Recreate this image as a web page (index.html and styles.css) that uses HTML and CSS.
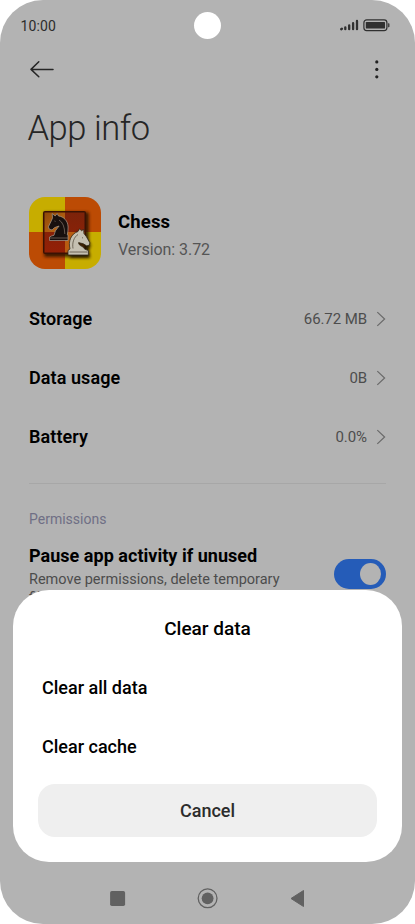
FILE: index.html
```html
<!DOCTYPE html>
<html lang="en">
<head>
<meta charset="utf-8">
<title>App info</title>
<link rel="stylesheet" href="styles.css">
</head>
<body>
<div class="phone">
  <header class="status">
    <span class="time">10:00</span>
    <svg class="status-icons" width="50" height="14" viewBox="0 0 50 14">
      <g stroke="#303030" stroke-width="2.3" stroke-linecap="round">
        <path d="M1.200 11.200l.7-.5M5.300 11.200V9.300M9.200 11.200V7.300M13.100 11.200V5.200M17 11.200V3"/>
      </g>
      <rect x="23.900" y="1.900" width="23" height="10.700" rx="2.800" fill="none" stroke="#303030" stroke-width="1.200"/>
      <rect x="25.800" y="3.900" width="19.200" height="6.700" rx=".7" fill="#303030"/>
      <path d="M47.900 5.200h.8q.8 0 .8.800v2.400q0 .8-.8.800h-.8z" fill="#444"/>
    </svg>
    <span class="camera"></span>
  </header>
  <nav class="toolbar">
    <svg width="26" height="18" viewBox="0 0 26 18" fill="none" stroke="#262626" stroke-width="1.5" stroke-linecap="round" stroke-linejoin="round"><path d="M24 9.400H2M9.800 1.700L2 9.400l7.800 7.400"/></svg>
    <svg width="6" height="22" viewBox="0 0 6 22" fill="#222"><circle cx="2.800" cy="3.900" r="1.600"/><circle cx="2.800" cy="11.400" r="1.600"/><circle cx="2.800" cy="18.800" r="1.600"/></svg>
  </nav>
  <h1 class="title">App info</h1>
  <section class="app">
    <svg class="app-icon" width="72" height="72" viewBox="0 0 72 72">
      <defs>
        <clipPath id="round"><rect width="72" height="72" rx="16"/></clipPath>
        <linearGradient id="dark" x1="0" y1="0" x2="0" y2="1"><stop offset="0" stop-color="#7c230a"/><stop offset="1" stop-color="#942006"/></linearGradient>
        <linearGradient id="gold" x1="0" y1="0" x2="1" y2="1"><stop offset="0" stop-color="#8d4908"/><stop offset="1" stop-color="#c76c17"/></linearGradient>
        <filter id="soft" x="-20%" y="-20%" width="140%" height="140%"><feGaussianBlur stdDeviation="1.5"/></filter>
      </defs>
      <g clip-path="url(#round)">
        <path fill="#c7ad00" d="M0 0h36v35H0zM36 35h36v37H36z"/>
        <path fill="#bc4b04" d="M36 0h36v35H36zM0 35h36v37H0z"/>
        <rect x="15" y="15" width="45" height="45" rx="2" fill="#241000" opacity=".8" filter="url(#soft)"/>
        <rect x="14" y="14" width="43" height="43" rx="2" fill="#3a1204"/>
        <path fill="url(#gold)" d="M15.500 15.500H36V35H15.500z"/>
        <path fill="url(#dark)" d="M36 15.500h19.500V35H36zM15.500 35H36v20.500H15.500z"/>
        <path fill="#b85c11" d="M36 35h19.500v20.500H36z"/>
        <path fill="#18100e" stroke="#a89c91" stroke-width=".7" d="M20.500 43.500v-3.500q2-1.300 4.500-1.700.3-4.300 5.100-9.300-2.600.7-4.800 1.800l-2.200 2.100-2.500-.5-1.300-2.500 3.200-6.500 1-2.500-.3-4.300 3 2.300 2-2.300 1.200 2.300c5.500.8 9.500 5 9.700 11.100.1 3-.3 5.300-.8 7.800H39v5.700z"/>
        <path d="M30 23q5.500 3 5.800 14M25.500 24l1 .4M21 41h18" fill="none" stroke="#87776b" stroke-width=".7"/>
        <path fill="#211300" opacity=".8" filter="url(#soft)" d="M41 61v-4l5-5 2-17 5 1 9 12-2 4-3-1 4 7v3z"/>
        <path fill="#c5c0b1" stroke="#302819" stroke-width=".8" d="M39 58v-4.500l2-1.600c-2-7.700 1-15 8-17.400l1.500-2.700 2 1.900 2.200-1.300.2 4 2.500 3.300 3.500 6.200-.8 2.500-2.500.4-3.300-2-4.700-1.200c-.4 3.300 5.100 3.500 6 6.500l3.800 1.500V58z"/>
        <path d="M44 51.500c-1-6 1-11.500 5-14M53 40.500l1 .6M40.500 55h18" fill="none" stroke="#5a5242" stroke-width=".8"/>
      </g>
    </svg>
    <div class="app-text">
      <h2 class="app-name">Chess</h2>
      <p class="version">Version: 3.72</p>
    </div>
  </section>
  <ul class="rows">
    <li class="row"><span class="label">Storage</span><span class="value">66.72 MB</span><svg class="chev" width="10" height="16" viewBox="0 0 10 16"><path d="M1.300 1.100L8.600 8l-7.300 6.900"/></svg></li>
    <li class="row"><span class="label">Data usage</span><span class="value">0B</span><svg class="chev" width="10" height="16" viewBox="0 0 10 16"><path d="M1.300 1.100L8.600 8l-7.300 6.900"/></svg></li>
    <li class="row"><span class="label">Battery</span><span class="value">0.0%</span><svg class="chev" width="10" height="16" viewBox="0 0 10 16"><path d="M1.300 1.100L8.600 8l-7.300 6.900"/></svg></li>
  </ul>
  <section class="permissions">
    <h3 class="section-name">Permissions</h3>
    <div class="pause">
      <div class="pause-text">
        <h4 class="pause-name">Pause app activity if unused</h4>
        <p class="pause-note">Remove permissions, delete temporary<br>files, and stop notifications</p>
      </div>
      <span class="switch"><span class="knob"></span></span>
    </div>
  </section>
  <div class="sheet">
    <h2 class="sheet-title">Clear data</h2>
    <div class="option">Clear all data</div>
    <div class="option">Clear cache</div>
    <button class="cancel">Cancel</button>
  </div>
  <footer class="navbar">
    <svg width="22" height="22" viewBox="0 0 22 22"><rect x="3.100" y="4" width="15" height="15" rx="1.800" fill="#616161"/></svg>
    <svg width="22" height="22" viewBox="0 0 22 22"><circle cx="10.600" cy="11.300" r="9.400" fill="none" stroke="#616161" stroke-width="1.300"/><circle cx="10.600" cy="11.300" r="5.900" fill="#616161"/></svg>
    <svg width="22" height="22" viewBox="0 0 22 22"><path d="M5 11.500L17.500 3.500v16z" fill="#616161" stroke="#616161" stroke-width="1" stroke-linejoin="round"/></svg>
  </footer>
</div>
</body>
</html>
```
FILE: styles.css
```css
* { box-sizing: border-box; margin: 0; padding: 0; }
body { background: #fff; font-family: Roboto, "Liberation Sans", sans-serif; color: #000; }
svg { display: block; flex: none; }
.phone { position: relative; width: 415px; height: 924px; background: #b3b3b3; border-radius: 43px; overflow: hidden; }
.status { position: relative; height: 50px; padding: 0 25px 0 20.500px; display: flex; align-items: center; justify-content: space-between; }
.time { font-size: 14px; font-weight: 440; color: #2c2c2c; letter-spacing: .1px; padding-top: 1px; }
.status-icons { margin: 0 0 1px; }
.camera { position: absolute; left: 194px; top: 12px; width: 27px; height: 27px; border-radius: 50%; background: #fff; }
.toolbar { height: 39px; padding: 0 35px 1px 29px; display: flex; align-items: center; justify-content: space-between; }
.title { height: 78px; padding-left: 27.500px; line-height: 79px; font-size: 34.500px; font-weight: 290; letter-spacing: -.45px; color: #262626; white-space: nowrap; }
.app { margin-top: 30px; padding-left: 29px; height: 72px; display: flex; gap: 17px; }
.app-icon { margin-top: .4px; }
.app-text { padding-top: 13px; }
.app-name { font-size: 18.500px; line-height: 24px; font-weight: 700; letter-spacing: .15px; }
.version { margin-top: 5px; font-size: 16px; line-height: 22px; letter-spacing: -.07px; color: #555; }
.rows { list-style: none; margin: 20px 29px 0; height: 195px; border-bottom: 1px solid #a7a7a7; }
.row { height: 59px; display: flex; align-items: center; }
.label { flex: 1; font-size: 18px; font-weight: 600; letter-spacing: .08px; }
.value { font-size: 15px; color: #4d4d4d; margin-right: 9px; letter-spacing: -.08px; }
.chev { fill: none; stroke: #6a6a6a; stroke-width: 1.2; }
.permissions { padding: 25px 29px 0; }
.section-name { font-size: 14px; line-height: 20px; font-weight: 400; color: #6f6f85; }
.pause { margin-top: 15px; display: flex; justify-content: space-between; }
.pause-text { width: 275px; }
.pause-name { font-size: 18px; line-height: 24px; font-weight: 700; white-space: nowrap; letter-spacing: .03px; }
.pause-note { font-size: 14.500px; line-height: 18px; margin-top: 3px; color: #4c4c4c; white-space: nowrap; }
.switch { width: 52px; height: 30px; margin-top: 15px; padding: 4px 5px; border-radius: 15px; background: #255cb8; display: flex; justify-content: flex-end; }
.knob { width: 21px; height: 22px; border-radius: 50%; background: #b3b3b3; }
.sheet { position: absolute; left: 13px; top: 590px; width: 389px; height: 272px; padding: 24px 25px 25px; border-radius: 36px; background: #fff; }
.sheet-title { text-align: center; font-size: 19px; line-height: 30px; font-weight: 500; }
.option { margin: 29px 4px 0; font-size: 18px; line-height: 30px; font-weight: 500; }
.cancel { display: block; width: 339px; height: 53px; margin-top: 22px; border: 0; border-radius: 17px; background: #efefef; font: 480 18px Roboto, sans-serif; color: #2c2c2c; }
.navbar { position: absolute; left: 0; bottom: 0; width: 100%; height: 52px; padding: 0 107px; display: flex; align-items: center; justify-content: space-between; }
```
